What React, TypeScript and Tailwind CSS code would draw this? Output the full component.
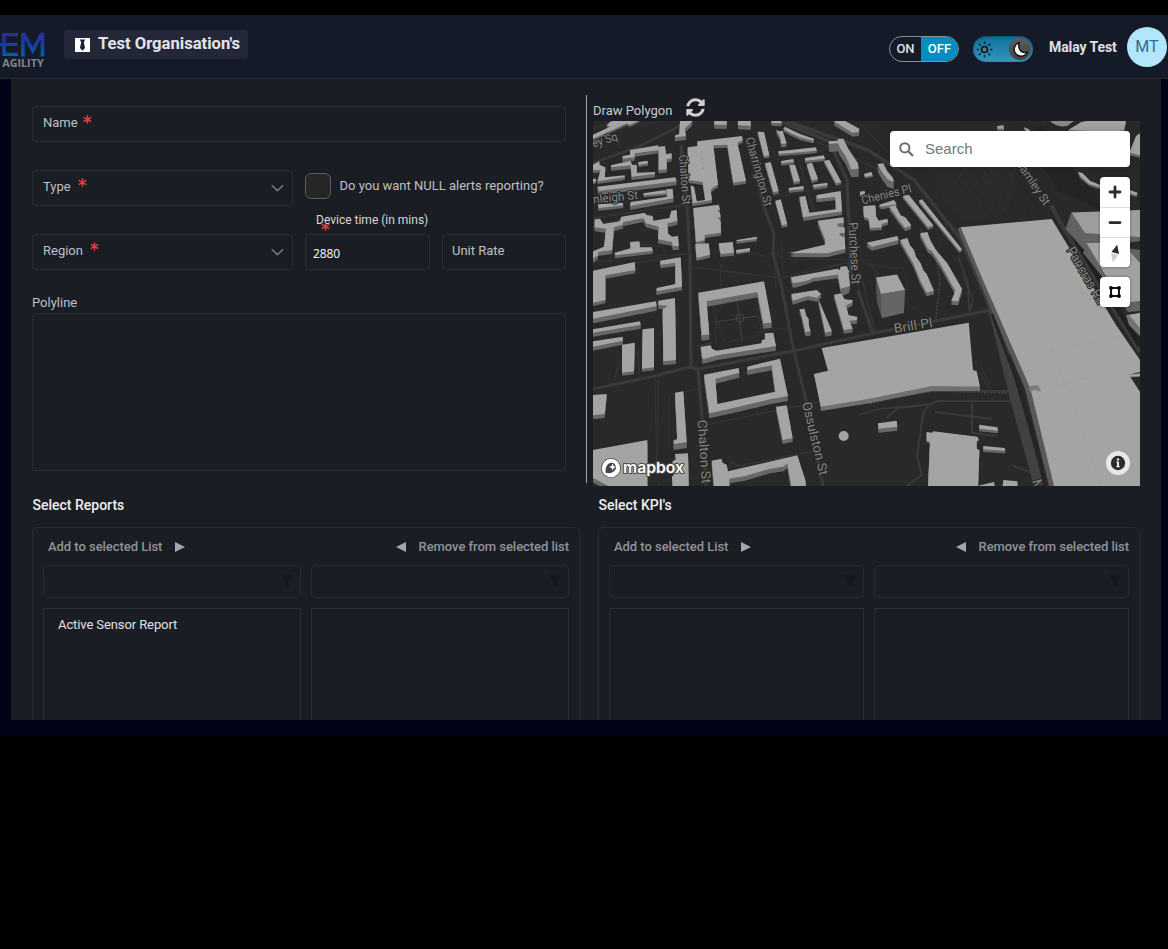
import React from "react";

type Shape = [points: string, height?: number];

const ROOF = "#a4a4a4";
const SIDE = "#686868";

function Buildings({ x, y, shapes }: { x: number; y: number; shapes: Shape[] }) {
  return (
    <g transform={`translate(${x} ${y}) scale(0.33333)`}>
      {shapes.map(([points, h = 12], i) => (
        <g key={i}>
          {[1, 0.75, 0.5, 0.25].map((f) => (
            <polygon key={f} points={points} fill={SIDE} transform={`translate(0 ${h * f})`} />
          ))}
          <polygon points={points} fill={ROOF} />
        </g>
      ))}
    </g>
  );
}

const northWest: Shape[] = [
  ["9,134 60,110 50,106 60,96 75,90 150,90 120,104 110,100 62,122 9,146", 6],
  ["270,93 308,93 284,116 288,138 254,142 256,136 268,132"],
  ["372,90 410,90 410,104 374,104"],
  ["443,90 482,90 482,108 445,106"],
  ["543,90 574,90 574,100 546,99", 9],
  ["585,110 600,118 630,132 672,146 670,152 630,142 600,128 580,116", 8],
  ["503,125 522,126 538,196 522,198", 7],
  ["558,120 568,124 578,122 590,160 574,162 570,140", 10],
  ["565,184 678,172 680,182 567,192", 7],
  ["645,204 702,196 704,206 645,212", 7],
  ["573,213 610,207 612,215 574,220", 7],
  ["598,224 615,224 630,272 612,276", 8],
  ["596,294 640,288 641,297 597,301", 7],
  ["650,222 666,218 684,266 666,272", 8],
  ["668,284 712,278 712,286 672,292", 7],
  ["702,212 718,210 754,276 738,280", 7],
  ["525,220 542,216 566,303 550,307", 8],
  ["556,332 572,328 592,403 576,406", 7],
  ["628,320 646,318 658,368 738,358 736,320 680,326 680,315 752,303 756,364 640,382", 11],
  ["683,392 760,382 762,398 742,401 744,410 764,412 764,428 748,430 750,437 764,440 766,476 712,490 598,489 704,464 706,450", 12],
  ["715,154 742,152 745,146 760,146 775,176 804,220 806,236 784,238 768,200 750,174 744,160 718,162", 24],
  ["730,93 766,93 808,116 806,126 788,128", 12],
  ["823,252 840,248 840,256 826,258", 6],
  ["293,172 322,168 322,154 456,138 458,150 442,158 468,272 430,278 412,164 370,166 384,284 372,290 362,300 366,330 308,340 302,286 312,290 320,334 346,330 338,276 296,270", 9],
  ["310,354 386,344 390,358 382,362 390,368 392,380 384,384 392,392 393,428 344,435 344,450 318,456", 9],
  ["316,462 356,460 360,494 320,504", 9],
  ["386,460 428,456 432,488 392,492", 9],
  ["440,450 500,440 500,447 440,454", 7],
  ["438,480 480,474 480,482 440,488", 5],
  ["120,180 203,166 206,170 225,168 228,192 245,190 245,204 230,208 230,238 206,240 206,180 134,190 134,202 98,206 98,198 120,194", 10],
  ["62,226 122,212 126,224 140,224 140,248 195,246 195,252 125,260 122,226 65,232", 10],
  ["145,216 172,212 174,220 146,224", 7],
  ["28,224 46,232 44,262 104,256 104,262 22,274 32,240 9,240 9,224 28,214", 8],
  ["9,266 18,266 18,274 9,276", 6],
  ["22,290 256,262 260,274 26,303", 12],
  ["160,310 226,300 228,310 162,316", 6],
  ["24,343 98,338 100,346 26,354", 8],
  ["228,298 248,296 250,325 120,348 122,336 232,320", 12],
  ["14,388 30,386 40,402 88,394 94,380 165,368 168,374 188,378 190,392 238,384 244,362 260,360 262,392 232,400 234,430 246,440 264,438 266,468 248,468 246,456 204,448 206,410 168,400 160,384 100,396 98,404 72,412 66,480 24,486 24,496 9,506 9,484 42,470 48,416 14,412", 12],
  ["74,488 122,475 120,456 148,454 150,472 186,472 188,482 76,496", 9],
  ["9,542 134,516 136,540 46,556 46,630 9,638", 10],
  ["210,512 272,502 276,590 200,604 200,594 256,582 256,518 212,524", 11],
  ["602,562 742,536 750,540 752,530 770,528 778,546 766,550 778,598 758,606 742,554 668,564 636,576 610,584", 11],
];

const southWest: Shape[] = [
  ["325,38 522,4 545,128 520,130 502,36 350,64 358,163 335,166", 16],
  ["332,200 362,196 366,206 380,212 514,190 516,180 526,178 524,160 550,158 558,198 382,226 338,238", 14],
  ["342,284 446,264 448,278 376,296 382,372 556,335 545,256 472,270 472,260 570,236 594,348 540,358 420,386 358,400", 15],
  ["558,380 590,376 608,474 578,480", 12],
  ["9,96 198,64 200,78 9,116", 14],
  ["205,62 255,54 258,240 220,244 218,88 234,78 205,74", 12],
  ["9,148 150,124 152,134 9,158", 12],
  ["9,184 98,170 98,182 9,200", 12],
  ["96,194 134,188 132,274 96,278", 9],
  ["158,148 192,144 192,262 156,266", 9],
  ["255,338 280,334 290,486 252,492 250,482 262,476", 18],
  ["9,345 50,342 44,402 9,406", 12],
  ["9,510 172,480 172,620 60,620 9,594", 14],
  ["255,522 294,520 296,620 248,620 246,590 254,582 246,574 248,544 258,538", 4],
  ["365,542 394,536 398,548 410,554 414,574 622,526 646,600 648,620 604,620 592,550 580,560 540,566 465,588 418,596 418,620 372,620", 14],
  ["604,42 680,30 694,42 682,50 726,154 706,158 684,54 654,48 608,62", 12],
  ["628,88 644,86 648,106 656,116 656,134 662,154 646,156 638,120 634,102", 13],
  ["732,44 754,40 764,58 788,60 786,68 768,76 776,106 802,110 800,120 778,122 788,146 762,150", 11],
  ["742,-24 774,-30 780,18 752,26", 12],
  ["605,-6 668,-4 644,4 608,10", 10],
];

const northEast: Shape[] = [
  ["52,222 70,220 82,244 98,262 102,276 82,268 66,246", 22],
  ["12,252 34,246 38,256 16,260", 5],
  ["0,305 14,303 14,312 0,316", 5],
  ["56,345 102,330 110,342 64,350", 8],
  ["10,348 46,346 48,378 56,392 82,386 84,396 64,402 66,412 30,414 26,386 12,380", 8],
  ["88,350 106,346 122,376 136,382 154,406 136,414 118,392", 10],
  ["128,318 146,314 220,406 204,412", 7],
  ["176,332 186,328 306,478 298,482", 6],
  ["20,458 112,438 116,450 36,470", 12],
  ["120,450 142,444 150,466 162,480 168,500 182,520 190,540 200,552 222,602 200,608 180,570 160,520", 11],
  ["180,430 202,426 212,452 228,480 262,520 306,596 294,634 274,632 286,602 240,520 216,484 204,476", 12],
  ["412,108 430,106 432,116 412,116", 6],
  ["492,112 504,116 514,126 500,126", 4],
  ["625,120 664,96 700,90 798,90 792,120 760,126", 6],
  ["655,245 668,250 690,272 722,286 720,292 688,282 660,258", 6],
  ["810,300 832,308 830,316 808,310", 5],
  ["828,138 842,128 842,196 808,188", 8],
];

const southEast: Shape[] = [
  ["54,430 110,422 112,440 56,446", 12],
  ["358,434 412,442 414,452 358,446", 8],
  ["370,498 434,504 436,512 370,508", 8],
  ["200,456 216,458 220,454 352,470 356,478 350,484 350,506 358,510 354,620 204,620 210,486 200,482", 5],
  ["430,600 472,604 472,620 428,620", 4],
  ["355,617 402,606 404,620 356,620", 4],
  ["806,284 842,280 842,288 812,290", 2],
];

function StreetLabel({ x, y, angle, length, size = 12, children }: { x: number; y: number; angle: number; length: number; size?: number; children: string }) {
  return (
    <text
      transform={`translate(${x} ${y}) rotate(${angle})`}
      textLength={length}
      lengthAdjust="spacingAndGlyphs"
      fontSize={size}
      fill="#858585"
      stroke="#262626"
      strokeWidth="2"
      paintOrder="stroke"
      strokeLinejoin="round"
      fontFamily="Roboto, sans-serif"
    >
      {children}
    </text>
  );
}

function CityMap() {
  return (
    <svg className="block h-[365px] w-[547px]" viewBox="593 121 547 365">
      <rect x="593" y="121" width="547" height="365" fill="#292929" />
      <g fill="none" stroke="#343434" strokeWidth="1">
        <path d="M593 129L612 122M605 131L660 122M593 226L677 207M593 262L690 253M608 262L611 256L640 244L662 246L667 256M720 262L722 309M742 251L772 258M718 262L738 282L737 288M715 308L716 344M712 306L755 298L762 334L725 343Z" />
        <path d="M737 301L742 341M716 322L757 316M740 318m-4 0a4 4 0 1 0 8 0a4 4 0 1 0-8 0" stroke="#424242" />
        <path d="M658 373L658 455M671 394L701 389M655 375L657 476L660 486M669 394L669 448M775 252L776 290M782 243L783 275M769 197L850 185M765 162L825 150M675 209L684 205M790 156L815 210M770 253L775 254L783 259L868 260L885 285" />
        <path d="M860 260L873 267L876 277M870 264L903 269L908 284L903 302L933 319M944 223L947 223L935 257M925 155L950 175L942 192L960 218M862 125L895 160L920 155L945 185M940 128L965 150L1005 160M970 165L978 184L980 202M1040 125L1040 153M1070 125L1080 150M1025 130L1060 160L1085 167" />
        <path d="M963 285L970 303L969 314M975 361L989 390M979 361L992 390" />
      </g>
      <path d="M942 128L1010 123L1020 160L1008 215L962 222L925 165Z" fill="#2b2b2b" />
      <g fill="none" stroke="#262626" strokeWidth="1">
        <path d="M948 168L985 218M960 168L992 216M973 168L1005 217M985 168L1018 216M998 168L1030 215M1010 168L1042 214M1015 125L1055 165M1000 125L1025 160" />
      </g>
      <path d="M1040 124L1062 148L1078 177L1095 190L1100 210L1082 202L1058 191L1048 174L1025 150Z" fill="#242424" />
      <g fill="none" stroke="#3a3a3a" strokeWidth="2.4" strokeLinejoin="round">
        <path d="M593 163L640 146L672 130L685 121" />
        <path d="M681 145L687 207L690 257L691 367L698 370L702 417L706 486" strokeWidth="3.2" />
        <path d="M746 138L764 207L774 234L773 254L781 283L793 347L807 405L823 486" strokeWidth="3" />
        <path d="M593 389L650 377L690 367L698 369L793 351L870 334L991 310" strokeWidth="3" />
        <path d="M593 218L682 205M593 271L690 253M693 267L781 278M781 278L850 262M697 346L712 343M758 332L787 328M710 424L823 401M729 461L740 466L813 451" strokeWidth="1.4" stroke="#343434" />
        <path d="M778 121L829 141L847 180L849 220L851 285M787 121L868 150L914 180L960 238L990 307" strokeWidth="3.5" />
        <path d="M817 142L880 170M798 158L813 210M860 270L875 333M865 292L876 334M615 378L618 366L638 352L640 378" strokeWidth="1.4" stroke="#343434" />
        <path d="M858 290L873 334" strokeWidth="3" />
        <path d="M861 403L931 391L1010 391M886 418L898 408L924 405M907 486L922 475L917 456L923 415Q927 402 940 401L1011 401M935 412L992 419M972 403V433L997 436M1013 466L1030 472" strokeWidth="2" />
        <path d="M858 415L879 409L932 404M958 257L968 282L969 310M962 273L973 300L970 312" strokeWidth="1.5" />
      </g>
      <path d="M985 280L993 308L1015 398L1039 486" stroke="#414141" strokeWidth="10" fill="none" />
      <path d="M992 314L1015 376L1037 449L1045 486" stroke="#242424" strokeWidth="3" fill="none" />
      <path d="M921 229L936 257L940 278L936 318M870 404L898 396L933 391L1008 393" stroke="#444" strokeWidth="1.6" strokeDasharray="2 1.5" fill="none" />
      <path d="M1051 205L1060 222L1140 352" stroke="#3a3a3a" strokeWidth="4" fill="none" />
      <path d="M1070 230L1140 346" stroke="#202020" strokeWidth="5" fill="none" />

      <Buildings x={590} y={90} shapes={northWest} />
      <Buildings x={590} y={280} shapes={southWest} />
      <Buildings x={860} y={90} shapes={northEast} />
      <Buildings x={860} y={280} shapes={southEast} />
      <path d="M702 158V164M703 167V170" stroke="#8e8e8e" strokeWidth="1" strokeDasharray="2 2" />
      <path d="M1050 121H1074L1067 126Q1057 128 1050 121Z" fill="#8a8a8a" />

      <path d="M876 277.5L881 294L905 290L904 313L882 318L877 301Z" fill="#656565" />
      <path d="M881 294L882 318L877 301L876 277.5Z" fill="#555" />
      <path d="M876 277.5L897 274.5L905 290L881 294Z" fill={ROOF} />

      <path d="M814 374L820.7 406.7V411L868 403.5L932 391L980 391V386.7L931.7 384Z" fill="#707070" />
      <path d="M821.6 348L968.7 322.7L973 370L976.7 371.3L980 386.7L931.7 386L868 399L820.7 406.7L814 374L828 370.7Z" fill={ROOF} />
      <circle cx="843.7" cy="436" r="5" fill={ROOF} />

      <path d="M960 227L957.5 229L1025 389L1049 486H1056L1032 389Z" fill="#595959" />
      <path d="M960.5 227.3L1051.7 219L1116 325L1140 360V372L1129 374.7L1140 392V486H1054L1030.5 389L983 280Z" fill={ROOF} />
      <path d="M1029 386L1038 385L1041 392L1036 390L1029 391Z" fill="#7b7b7b" />
      <path d="M1040 346L1050 343L1075 410L1102 486M1065 388L1063 377M1056 386L1093 376M1043 352L1120 337" stroke="#9f9f9f" strokeWidth="0.7" fill="none" />

      <path d="M1071.5 212.5L1065.5 229L1083 249L1140 241V211Z" fill="#626262" />
      <path d="M1071.5 212.5L1140 210V237L1085 233Z" fill="#9d9d9d" />
      <path d="M1086.5 243L1083 253L1113 290L1128 312L1140 311V250Z" fill="#626262" />
      <path d="M1086.5 243H1122L1140 263V301L1122 303Z" fill="#a1a1a1" />
      <path d="M1126 315L1140 313V336L1129 325Z" fill="#747474" />
      <path d="M1129 315L1140 313V328Z" fill={ROOF} />

      <StreetLabel x={593.5} y={147.5} angle={-17} length={26}>ey Sq</StreetLabel>
      <StreetLabel x={593.5} y={203.5} angle={-6} length={45}>nleigh St</StreetLabel>
      <StreetLabel x={679} y={155} angle={86} length={50}>Chalton St</StreetLabel>
      <StreetLabel x={745.5} y={138.5} angle={74.5} length={71}>Charrington St</StreetLabel>
      <StreetLabel x={848.5} y={222.5} angle={87} length={62} size={13}>Purchese St</StreetLabel>
      <StreetLabel x={697.5} y={420} angle={86} length={64} size={13}>Chalton St</StreetLabel>
      <StreetLabel x={802} y={403} angle={76.5} length={75} size={13}>Ossulston St</StreetLabel>
      <StreetLabel x={894.5} y={333} angle={-9} length={39} size={13}>Brill Pl</StreetLabel>
      <StreetLabel x={862.5} y={204.5} angle={-14} length={51}>Chenies Pl</StreetLabel>
      <StreetLabel x={1015} y={163} angle={56} length={52}>Camley St</StreetLabel>
      <StreetLabel x={1066.5} y={250} angle={60} length={64} size={13}>Pancras Rd</StreetLabel>
      <StreetLabel x={1032} y={481} angle={72} length={12} size={13}>M</StreetLabel>
    </svg>
  );
}

function MapboxLogo() {
  return (
    <svg className="absolute bottom-2 left-1.5 h-[22px] w-[90px] overflow-visible" viewBox="0 0 90 22">
      <circle cx="12" cy="12" r="10" fill="#4a4a4a" />
      <circle cx="12" cy="12" r="9.2" fill="#fff" />
      <path d="M15.8 8.2C13.9 6.3 10.7 6.4 8.7 8.4C5.8 11.3 6.7 16 6.7 16.8C7.5 17 12.4 18 15.3 15.1C17.4 13 17.5 10.2 15.8 8.2Z" fill="#444" />
      <path d="M13.6 7.5L14.7 10L17 11L14.7 12L13.6 14.4L12.5 12L10.1 11L12.5 10Z" fill="#fff" />
      <text x="24" y="16.5" textLength="61" lengthAdjust="spacingAndGlyphs" fontFamily="Inter, sans-serif" fontWeight="600" fontSize="15" fill="#fff" stroke="#4a4a4a" strokeWidth="2" strokeLinejoin="round" paintOrder="stroke">
        mapbox
      </text>
    </svg>
  );
}

function MapControls() {
  return (
    <div className="absolute top-[56px] right-[10.5px] flex flex-col gap-2.5">
      <div className="flex h-[90px] w-[30px] flex-col divide-y divide-[#ddd] rounded bg-white shadow-[0_0_0_2px_rgba(0,0,0,0.1)]">
        <button className="flex flex-1 items-center justify-center">
          <svg className="size-[30px]" viewBox="0 0 30 30"><path d="M15 10V20M10 15H20" stroke="#2b2b2b" strokeWidth="2.8" strokeLinecap="round" /></svg>
        </button>
        <button className="flex flex-1 items-center justify-center">
          <svg className="size-[29px]" viewBox="0 0 29 29"><path d="M10 14.6H20" stroke="#2b2b2b" strokeWidth="2.8" strokeLinecap="round" /></svg>
        </button>
        <button className="flex flex-1 items-center justify-center">
          <svg className="size-[29px]" viewBox="0 0 29 29">
            <path d="M17.2 6.8L11.4 14L19 15.9Z" fill="#2b2b2b" />
            <path d="M11 15.4L18.6 17L12.8 24.2Z" fill="#ccc" />
          </svg>
        </button>
      </div>
      <button className="flex size-[30px] items-center justify-center rounded bg-white shadow-[0_0_0_2px_rgba(0,0,0,0.1)]">
        <svg className="size-[14px]" viewBox="0 0 14 14">
          <rect x="3" y="3" width="8" height="8" fill="none" stroke="#000" strokeWidth="1.8" />
          <g><circle cx="3" cy="3" r="1.9" /><circle cx="11" cy="3" r="1.9" /><circle cx="3" cy="11" r="1.9" /><circle cx="11" cy="11" r="1.9" /></g>
        </svg>
      </button>
    </div>
  );
}

function Required({ className }: { className: string }) {
  return (
    <svg className={`h-[9px] w-[9px] ${className}`} viewBox="0 0 9 9">
      <path d="M4.5 0.3V8.7M0.7 2.3L8.3 6.7M8.3 2.3L0.7 6.7" stroke="#e53e43" strokeWidth="1.5" />
    </svg>
  );
}

function Chevron() {
  return (
    <svg className="mr-[8.5px] ml-auto h-[9px] w-[13px]" viewBox="0 0 13 9" fill="none">
      <path d="M0.8 1.2L6.5 6.6L12.2 1.2" stroke="#747a83" strokeWidth="1.5" />
    </svg>
  );
}

const field = "flex h-9 items-center rounded-[4px] border border-[#2c2e31] pl-[10px]";

function EmLogo() {
  return (
    <svg className="h-[37px] w-[46px] overflow-visible" viewBox="0 0 46 37">
      <defs>
        <linearGradient id="em" gradientUnits="userSpaceOnUse" x1="0" y1="1" x2="0" y2="26">
          <stop offset="0" stopColor="#33289a" />
          <stop offset="0.5" stopColor="#14409c" />
          <stop offset="1" stopColor="#0060ae" />
        </linearGradient>
      </defs>
      <g fill="none" stroke="url(#em)">
        <path d="M18 3.6H4V23.4H18M0 13.4H17.5" strokeWidth="3.4" />
        <path d="M22.9 25.5V3.6H24.3L32.7 19.4L41.2 3.6H42.5V25.5" strokeWidth="3.6" />
      </g>
      <text x="2.2" y="35.8" textLength="41.5" lengthAdjust="spacingAndGlyphs" fontFamily="'Open Sans', sans-serif" fontWeight="700" fontSize="11" fill="#82858c">AGILITY</text>
    </svg>
  );
}

function Header() {
  return (
    <header className="flex h-16 shrink-0 items-start border-b border-[#2b2c2f] bg-[#151a29]">
      <div className="mt-4 w-16"><EmLogo /></div>
      <div className="mt-[15px] flex h-[29px] w-[184px] items-center rounded-[3px] bg-[#242737] pl-[11px]">
        <svg className="h-[14px] w-[15px]" viewBox="0 0 15 14">
          <path d="M0 0H15V14H0Z" fill="#fff" />
          <path d="M4.8 1.6H10.2L8.8 4.2L10 10L7.5 12.7L5 10L6.2 4.2Z" fill="#1b1e2c" />
        </svg>
        <span className="ml-2 -mt-[1px] text-[16.6px] font-bold whitespace-nowrap text-[#e3e4e8]">Test Organisation's</span>
      </div>
      <div className="mt-[21px] ml-auto flex h-[26px] w-[70px] overflow-hidden rounded-full border border-[#8b8d94] text-[13px] font-medium">
        <span className="flex flex-1 items-center justify-center text-[#dfe0e3]">ON</span>
        <span className="flex w-[37px] items-center justify-center bg-[#058dc0] text-white">OFF</span>
      </div>
      <div className="mt-[21px] ml-[14px] flex h-[26px] w-[60px] items-center justify-between rounded-full bg-gradient-to-b from-[#0c7299] to-[#3396bb] pr-0.5 pl-[3px] shadow-[inset_0_1px_3px_rgba(0,0,0,0.35)]">
        <svg className="size-[17px]" viewBox="0 0 17 17" stroke="#07151d" fill="none">
          <circle cx="8.5" cy="8.5" r="3" fill="#69737b" strokeWidth="1.6" />
          <path d="M8.5 1.4V2.2M8.5 14.8V15.6M1.4 8.5H2.2M14.8 8.5H15.6M3.4 3.4L4 4M13 13L13.6 13.6M3.4 13.6L4 13M13 4L13.6 3.4" strokeWidth="1.6" strokeLinecap="round" />
        </svg>
        <span className="flex size-[22px] items-center justify-center rounded-full bg-gradient-to-b from-[#5c5c5c] to-[#424242]">
          <svg className="size-[17px]" viewBox="0 0 17 17">
            <path d="M7.3 1.3C2.5 3.2 1 8.3 3.2 11.9C5.6 16 12.5 16.8 15.5 11.2C9 13 5.2 7.6 7.3 1.3Z" fill="#fff" stroke="#111" strokeWidth="1.4" strokeLinejoin="round" />
          </svg>
        </span>
      </div>
      <span className="mt-[22px] ml-4 w-[69px] text-sm font-bold tracking-[-0.08px] whitespace-nowrap text-[#e0e0e2]">Malay Test</span>
      <span className="mt-3 mr-px ml-[9px] flex size-10 items-center justify-center rounded-full bg-[#b3e5fc] text-base text-[#2d6c8b]">MT</span>
    </header>
  );
}

function Form() {
  return (
    <section className="flex h-[397px] w-[534px] flex-col pt-[11px] text-[13px] text-[#bfc0c3]">
      <div className={`${field} pb-[2px]`}>
        Name<Required className="-mt-[8px] ml-[5px]" />
      </div>
      <div className="mt-7 flex h-9 items-center">
        <div className={`${field} w-[261px]`}>
          <span className="-mt-[2px] flex">Type<Required className="mt-px ml-[7px]" /></span>
          <Chevron />
        </div>
        <span className="-mt-[4px] ml-3 size-[26px] rounded-[6px] border border-[#5b5c5e] bg-[#262626]" />
        <span className="-mt-[5px] ml-[8.5px] whitespace-nowrap">Do you want NULL alerts reporting?</span>
      </div>
      <div className="mt-7 flex h-9 gap-3">
        <div className={`${field} w-[261px]`}>
          <span className="-mt-[2px] flex">Region<Required className="mt-px ml-[7px]" /></span>
          <Chevron />
        </div>
        <div className="relative flex h-9 w-[125px] items-center rounded-[4px] border border-[#2c2e31] pt-[3px] pl-[7px] font-['Noto_Sans'] text-[12px] tracking-[-0.1px] text-[#f1f1f1]">
          2880
          <span className="absolute -top-[24px] left-[10px] font-[Roboto] text-[12px] leading-[18px] tracking-normal whitespace-nowrap text-[#d8d8da]">Device time (in mins)</span>
          <Required className="absolute -top-[13px] left-[14.5px]" />
        </div>
        <div className={`${field} flex-1 pb-[2px] pl-[9px]!`}>Unit Rate</div>
      </div>
      <label className="mt-[23px] leading-5">Polyline</label>
      <div className="h-[158px] shrink-0 rounded-[4px] border border-[#2c2e31]" />
    </section>
  );
}

function MapSection() {
  return (
    <section className="flex w-[547px] flex-col">
      <div className="flex h-[26px] items-end">
        <span className="text-[13px] leading-[20px] text-[#c9cacd]">Draw Polygon</span>
        <svg className="mb-[4px] ml-[14px] size-[19px]" viewBox="0 0 512 512" fill="#d0d0d1">
          <path d="M370.72 133.28C339.458 104.008 298.888 87.962 255.848 88c-77.458.068-144.328 53.178-162.791 126.85-1.344 5.363-6.122 9.15-11.651 9.15H24.103c-7.498 0-13.194-6.807-11.807-14.176C33.933 94.924 134.813 8 256 8c66.448 0 126.791 26.136 171.315 68.685L463.03 40.97C478.149 25.851 504 36.559 504 57.941V192c0 13.255-10.745 24-24 24H345.941c-21.382 0-32.09-25.851-16.971-40.971l41.75-41.749zM32 296h134.059c21.382 0 32.09 25.851 16.971 40.971l-41.75 41.75c31.262 29.273 71.835 45.319 114.876 45.28 77.418-.07 144.315-53.144 162.787-126.849 1.344-5.363 6.122-9.15 11.651-9.15h57.304c7.498 0 13.194 6.807 11.807 14.176C478.067 417.076 377.187 504 256 504c-66.448 0-126.791-26.136-171.315-68.685L48.97 471.03C33.851 486.149 8 475.441 8 454.059V320c0-13.255 10.745-24 24-24z" />
        </svg>
      </div>
      <div className="relative overflow-hidden">
        <CityMap />
        <div className="absolute top-[10px] right-[10px] flex h-9 w-[240px] items-center rounded bg-white pl-[9px] font-['Liberation_Sans'] text-[15px] text-[#72777d] shadow-[0_0_10px_2px_rgba(0,0,0,0.1)]">
          <svg className="size-[15px]" viewBox="0 0 15 15" fill="none" stroke="#6f6f6f">
            <circle cx="5.8" cy="5.8" r="4.6" strokeWidth="2" /><path d="M9.3 9.3L14 14" strokeWidth="2.3" />
          </svg>
          <span className="ml-[11px]">Search</span>
        </div>
        <MapControls />
        <MapboxLogo />
        <svg className="absolute right-[10px] bottom-[11px] size-6" viewBox="0 0 24 24">
          <circle cx="12" cy="12" r="12" fill="#e8e8e8" />
          <circle cx="12" cy="12" r="7.2" fill="#2b2b2b" />
          <path d="M10.2 10.5H13V15.3H14V16.3H10.2V15.3H11V11.5H10.2Z" fill="#e8e8e8" /><circle cx="12" cy="8.5" r="1.2" fill="#e8e8e8" />
        </svg>
      </div>
    </section>
  );
}

function PickColumn({ items }: { items: string[] }) {
  return (
    <div className="flex flex-1 flex-col gap-[10px]">
      <div className="flex h-[33px] items-center justify-end rounded-[5px] border border-[#2c2a2a] pr-[6px]">
        <svg className="-mt-0.5 h-3 w-[14px]" viewBox="0 0 14 12"><path d="M0 0H14L9 5.5V11.5H5V5.5Z" fill="#15171d" /></svg>
      </div>
      <ul className="h-[160px] border border-[#2e3035] px-[14px] pt-[6px] text-[13px] leading-5 tracking-[-0.1px] text-[#e0e0e2]">
        {items.map((item) => <li key={item}>{item}</li>)}
      </ul>
    </div>
  );
}

function PickList({ title, width, items }: { title: string; width: string; items: string[] }) {
  return (
    <section className={width}>
      <h2 className="pl-[0.5px] text-[14px] leading-5 font-medium text-[#f0f0f1]">{title}</h2>
      <div className="mt-3 h-[240px] rounded-[5px] border border-[#2a2c2e] px-[10px]">
        <div className="-mb-px flex h-[38px] items-center justify-between pl-[5px] text-[13px] font-medium tracking-[-0.04px] text-[#929397]">
          <span className="flex items-center gap-[13px]">
            Add to selected List
            <svg className="size-[10px]" viewBox="0 0 10 10"><path d="M0 0L10 5L0 10Z" fill="#a5a6a9" /></svg>
          </span>
          <span className="flex items-center gap-[13px]">
            <svg className="size-[10px]" viewBox="0 0 10 10"><path d="M10 0L0 5L10 10Z" fill="#a5a6a9" /></svg>
            Remove from selected list
          </span>
        </div>
        <div className="flex gap-[10px]">
          <PickColumn items={items} />
          <PickColumn items={[]} />
        </div>
      </div>
    </section>
  );
}

export default function App() {
  return (
    <div className="h-[949px] w-[1168px] overflow-hidden bg-black pt-[15px] font-[Roboto,sans-serif]">
      <div className="flex h-[720px] flex-col bg-[#000416]">
        <Header />
        <main className="mr-[7px] ml-[11px] h-[641px] overflow-hidden bg-[#1a1d24] bg-gradient-to-b from-[#1b1c20] to-[#1a1d24] to-[12px] pt-4 pl-[21px]">
          <div className="flex h-[400px] items-start">
            <Form />
            <div className="mr-[6px] ml-5 h-[388px] w-px bg-[#a0a1a4]" />
            <MapSection />
          </div>
          <div className="flex gap-[18px]">
            <PickList title="Select Reports" width="w-[548px]" items={["Active Sensor Report"]} />
            <PickList title="Select KPI's" width="w-[542px]" items={[]} />
          </div>
        </main>
      </div>
    </div>
  );
}
